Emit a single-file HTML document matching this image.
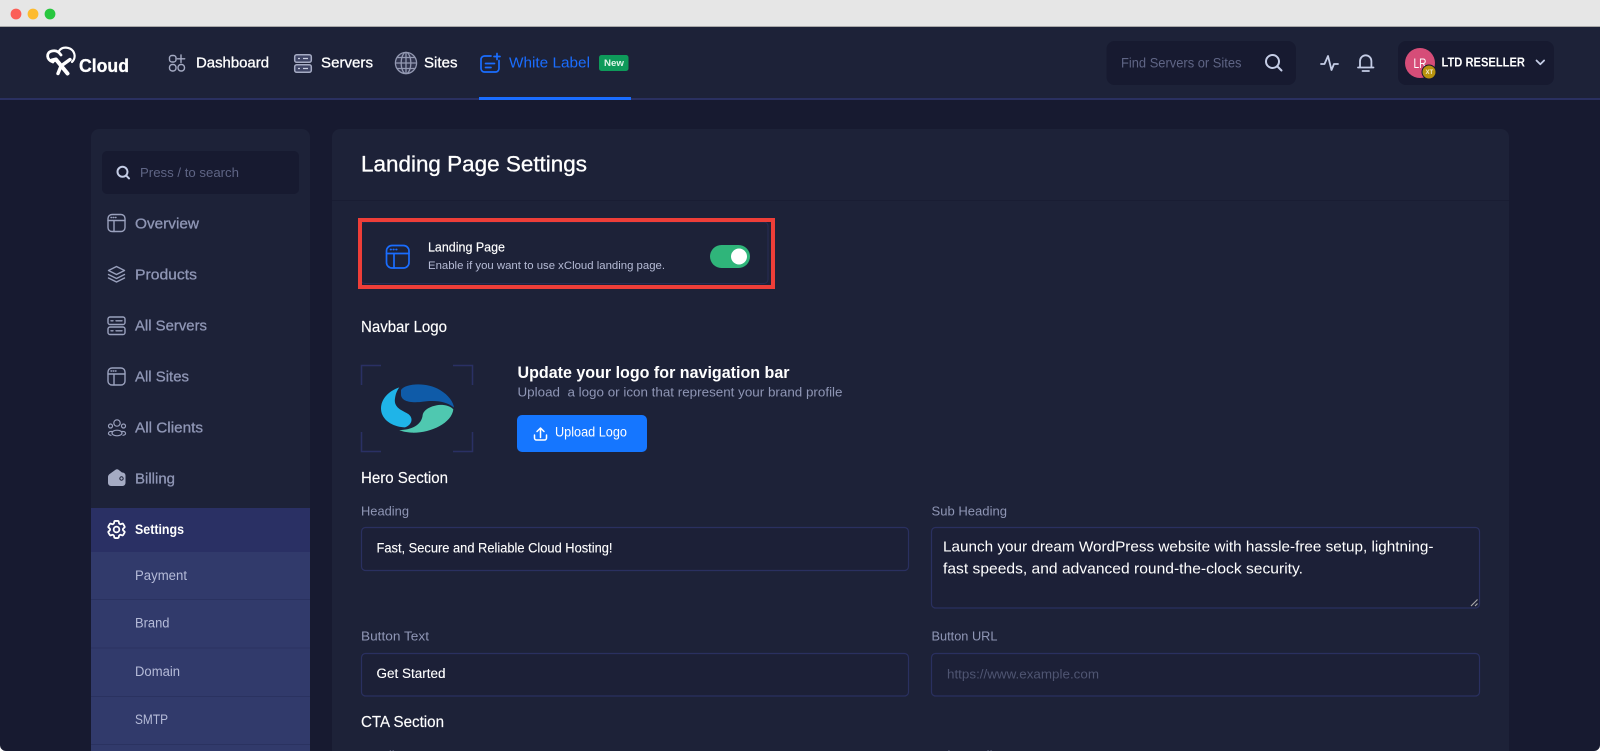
<!DOCTYPE html>
<html lang="en">
<head>
<meta charset="utf-8">
<title>Landing Page Settings</title>
<style>
html,body{margin:0;padding:0;width:1600px;height:751px;overflow:hidden;background:#171a30}
svg{display:block}
text{font-family:"Liberation Sans",sans-serif;white-space:pre}
.m{stroke-width:.3px;paint-order:stroke}
.w{fill:#fff;stroke:#fff;stroke-width:.3px}
.g{fill:#8f96b5;stroke:#8f96b5}
.s{fill:#b5bbd8}
.ph{fill:#5f6585}
.ic{fill:none;stroke:#9aa1bd;stroke-width:1.4;stroke-linecap:round;stroke-linejoin:round}
.bl{fill:none;stroke:#1a6dff;stroke-width:1.7;stroke-linecap:round;stroke-linejoin:round}
.in{fill:#1c2037;stroke:#2a3060;stroke-width:1.2}
</style>
</head>
<body>
<svg width="1600" height="751" viewBox="0 0 1600 751" xmlns="http://www.w3.org/2000/svg">
<rect width="1600" height="751" fill="#171a30"/>
<!-- window bar -->
<rect width="1600" height="26.5" fill="#e6e6e6"/>
<rect y="26" width="1600" height="1" fill="#a9a9a9"/>
<circle cx="16" cy="14" r="5.4" fill="#fb5f57"/>
<circle cx="33" cy="14" r="5.4" fill="#fdbb2e"/>
<circle cx="50" cy="14" r="5.4" fill="#28c73f"/>
<!-- navbar -->
<rect y="27" width="1600" height="71" fill="#1d2238"/>
<rect y="98" width="1600" height="2" fill="#2a3060"/>
<rect x="479" y="97" width="152" height="3" fill="#1a6dff"/>
<!-- logo -->
<g fill="none" stroke="#fff" stroke-linecap="round" stroke-linejoin="round">
<path d="M53 62C46 60 46 52 52 51C56 50 59 52 61 55" stroke-width="2.800"/>
<path d="M59 51C62 46 70 47 73 51C75.500 55 75 59 72 62" stroke-width="2.200"/>
<path d="M52 60.500L56 59.500L67.500 73.500" stroke-width="4"/>
<path d="M70 59.500L61 66L58 73.500" stroke-width="3.400"/>
</g>
<text x="79" y="72" font-size="18.500" font-weight="700" class="w" textLength="50" lengthAdjust="spacingAndGlyphs">Cloud</text>
<!-- nav items -->
<g class="ic" style="stroke:#a5abc3">
<rect x="169.500" y="55.500" width="6.500" height="6.500" rx="2.400"/>
<path d="M181 55v7.500M177.300 58.800h7.400"/>
<rect x="169.500" y="64.500" width="6.500" height="6.500" rx="2.800"/>
<rect x="178" y="64.500" width="6.500" height="6.500" rx="3"/>
</g>
<text x="196" y="67.500" font-size="15" class="m w" textLength="73" lengthAdjust="spacingAndGlyphs">Dashboard</text>
<g fill="#3f4565" stroke="#a5abc3" stroke-width="1.5">
<rect x="294.700" y="54.700" width="16.600" height="7.600" rx="2"/>
<rect x="294.700" y="64.700" width="16.600" height="7.600" rx="2"/>
</g>
<path d="M298 58.500h2M303 58.500h5M298 68.500h2M303 68.500h5" stroke="#c9cee0" stroke-width="1.200"/>
<text x="321" y="67.500" font-size="15" class="m w" textLength="52" lengthAdjust="spacingAndGlyphs">Servers</text>
<g fill="none" stroke="#9399b2" stroke-width="1.300">
<circle cx="406" cy="63" r="10.600" fill="#30344e"/>
<ellipse cx="406" cy="63" rx="4.800" ry="10.600"/>
<path d="M406 52.400v21.200M395.400 63h21.200M397 57.500h18M397 68.500h18"/>
</g>
<text x="424" y="67.500" font-size="15" class="m w" textLength="33.500" lengthAdjust="spacingAndGlyphs">Sites</text>
<path class="bl" d="M491 56h-6.500a3.500 3.500 0 0 0-3.500 3.500v9a3.500 3.500 0 0 0 3.500 3.500h11a3.500 3.500 0 0 0 3.500-3.500v-8M497 53.500v6M494 56.500h6M485.500 63.500h9M485.500 67.500h5.500"/>
<text x="509" y="67.500" font-size="15" fill="#1a6dff" textLength="81" lengthAdjust="spacingAndGlyphs">White Label</text>
<rect x="599" y="55" width="29.500" height="16" rx="2.500" fill="#0e9a5a"/>
<text x="604" y="66" font-size="9.500" font-weight="700" fill="#dff5e9" textLength="20" lengthAdjust="spacingAndGlyphs">New</text>
<!-- right nav -->
<rect x="1106.500" y="41" width="189.500" height="44" rx="8" fill="#171a30"/>
<text x="1121" y="67.500" font-size="13.500" class="ph" textLength="120.500" lengthAdjust="spacingAndGlyphs">Find Servers or Sites</text>
<g fill="none" stroke="#c5cde6" stroke-width="2" stroke-linecap="round">
<circle cx="1272.500" cy="61.500" r="6.500"/>
<path d="M1277.500 66.500l4 4"/>
</g>
<path d="M1321 64h3.500l3.500-8 3.500 14 2.500-6h4" fill="none" stroke="#c5cde6" stroke-width="1.800" stroke-linecap="round" stroke-linejoin="round"/>
<path d="M1358 67.500h15.500M1360 67.500v-6.500a5.700 5.700 0 0 1 11.400 0v6.500M1362.500 71h6.500" fill="none" stroke="#c5cde6" stroke-width="1.800" stroke-linecap="round"/>
<rect x="1398" y="41" width="156" height="44" rx="8" fill="#171a30"/>
<circle cx="1420" cy="63" r="15" fill="#d64d78"/>
<text x="1413.500" y="68" font-size="14" fill="#fff" textLength="13" lengthAdjust="spacingAndGlyphs">LR</text>
<circle cx="1429" cy="72" r="7" fill="#b8930e" stroke="#171a30" stroke-width="1"/>
<text x="1425.500" y="74.200" font-size="6" font-weight="700" fill="#f3eccb">XT</text>
<text x="1441.500" y="66.500" font-size="12.500" font-weight="700" fill="#fff" textLength="83.500" lengthAdjust="spacingAndGlyphs">LTD RESELLER</text>
<path d="M1536.500 60.500l3.800 3.800 3.800-3.800" fill="none" stroke="#c5cde6" stroke-width="1.800" stroke-linecap="round" stroke-linejoin="round"/>

<!-- sidebar -->
<path d="M91 751V137a8 8 0 0 1 8-8H302a8 8 0 0 1 8 8V751Z" fill="#1d2238"/>
<rect x="102" y="151" width="197" height="43" rx="5" fill="#171a30"/>
<g fill="none" stroke="#c5cde6" stroke-width="2" stroke-linecap="round">
<circle cx="122.500" cy="171.800" r="5"/><path d="M126.300 175.700l2.700 2.700"/>
</g>
<text x="140" y="177" font-size="13" class="ph" textLength="99" lengthAdjust="spacingAndGlyphs">Press / to search</text>

<g class="ic">
<rect x="108" y="214.500" width="17" height="17" rx="4"/>
<path d="M108 220.500h17M114 220.500v11"/>
<path d="M111 217.500h.6M113.200 217.500h.6M115.400 217.500h.6"/>
</g>
<text x="135" y="228.500" font-size="15" class="m g" textLength="64" lengthAdjust="spacingAndGlyphs">Overview</text>
<g class="ic">
<path d="M116.500 266.500l8 4-8 4-8-4z"/>
<path d="M108.500 274.500l8 4 8-4M108.500 278l8 4 8-4"/>
</g>
<text x="135" y="279.500" font-size="15" class="m g" textLength="62" lengthAdjust="spacingAndGlyphs">Products</text>
<g class="ic">
<rect x="108" y="317" width="17" height="7.500" rx="2"/>
<rect x="108" y="327" width="17" height="7.500" rx="2"/>
<path d="M111 320.800h2M116 320.800h6M111 330.800h2M116 330.800h6"/>
</g>
<text x="135" y="330.500" font-size="15" class="m g" textLength="72" lengthAdjust="spacingAndGlyphs">All Servers</text>
<g class="ic">
<rect x="108" y="368" width="17" height="17" rx="4"/>
<path d="M108 374h17M114 374v11"/>
<path d="M111 371h.6M113.200 371h.6M115.400 371h.6"/>
</g>
<text x="135" y="381.500" font-size="15" class="m g" textLength="54" lengthAdjust="spacingAndGlyphs">All Sites</text>
<g class="ic" style="stroke-width:1.200">
<circle cx="117" cy="423" r="3.200"/>
<ellipse cx="117" cy="433" rx="5" ry="2.800"/>
<circle cx="110.500" cy="426" r="2"/><circle cx="123.500" cy="426" r="2"/>
<path d="M112 431.500c-4-.5-5 3.500-1 3.800M122 431.500c4-.5 5 3.500 1 3.800"/>
</g>
<text x="135" y="432.500" font-size="15" class="m g" textLength="68" lengthAdjust="spacingAndGlyphs">All Clients</text>
<path d="M108 477c0-1 .5-2 1.300-2.700l6.200-4.500c1-.7 2-.7 3 0l3.500 2.700h.5a3 3 0 0 1 3 3V483a3 3 0 0 1-3 3h-11.500a3 3 0 0 1-3-3z" fill="#a5abc3"/>
<circle cx="121.500" cy="478.500" r="1.700" fill="none" stroke="#1d2238" stroke-width="1"/>
<text x="135" y="483.500" font-size="15" class="m g" textLength="40" lengthAdjust="spacingAndGlyphs">Billing</text>

<rect x="91" y="508" width="219" height="44" fill="#2a3064"/>
<g transform="translate(116.500 529.500) scale(.95) translate(-12 -12)" fill="none" stroke="#fff" stroke-width="1.900" stroke-linejoin="round">
<path d="M9.594 3.940c.09-.542.56-.94 1.110-.94h2.593c.55 0 1.020.398 1.110.94l.213 1.281c.063.374.313.686.645.870.074.04.147.083.22.127.325.196.72.257 1.075.124l1.217-.456a1.125 1.125 0 0 1 1.370.49l1.296 2.247a1.125 1.125 0 0 1-.26 1.431l-1.003.827c-.293.241-.438.613-.43.992a7.723 7.723 0 0 1 0 .255c-.008.378.137.75.43.991l1.004.827c.424.35.534.955.26 1.430l-1.298 2.247a1.125 1.125 0 0 1-1.369.491l-1.217-.456c-.355-.133-.75-.072-1.076.124a6.470 6.470 0 0 1-.22.128c-.331.183-.581.495-.644.869l-.213 1.281c-.09.543-.56.94-1.110.94h-2.594c-.55 0-1.019-.398-1.110-.94l-.213-1.281c-.062-.374-.312-.686-.644-.870a6.520 6.520 0 0 1-.22-.127c-.325-.196-.72-.257-1.076-.124l-1.217.456a1.125 1.125 0 0 1-1.369-.49l-1.297-2.247a1.125 1.125 0 0 1 .26-1.431l1.004-.827c.292-.24.437-.613.43-.991a6.932 6.932 0 0 1 0-.255c.007-.38-.138-.751-.43-.992l-1.004-.827a1.125 1.125 0 0 1-.26-1.430l1.297-2.247a1.125 1.125 0 0 1 1.370-.491l1.216.456c.356.133.751.072 1.076-.124.072-.044.146-.086.22-.128.332-.183.582-.495.644-.869l.214-1.280Z"/>
<circle cx="12" cy="12" r="3"/>
</g>
<text x="135" y="534" font-size="13.500" font-weight="700" fill="#fff" textLength="49" lengthAdjust="spacingAndGlyphs">Settings</text>

<rect x="91" y="552" width="219" height="199" fill="#313a6b"/>
<g fill="#2a3260">
<rect x="91" y="599" width="219" height="1"/>
<rect x="91" y="647.500" width="219" height="1"/>
<rect x="91" y="696" width="219" height="1"/>
<rect x="91" y="744" width="219" height="1"/>
</g>
<text x="135" y="580" font-size="13.500" class="s" textLength="52" lengthAdjust="spacingAndGlyphs">Payment</text>
<text x="135" y="627.500" font-size="13.500" class="s" textLength="34.500" lengthAdjust="spacingAndGlyphs">Brand</text>
<text x="135" y="676" font-size="13.500" class="s" textLength="45" lengthAdjust="spacingAndGlyphs">Domain</text>
<text x="135" y="724" font-size="13.500" class="s" textLength="33" lengthAdjust="spacingAndGlyphs">SMTP</text>

<!-- main panel -->
<path d="M332 751V137a8 8 0 0 1 8-8H1501a8 8 0 0 1 8 8V751Z" fill="#1d2238"/>
<rect x="332" y="200" width="1177" height="1" fill="#191d33"/>
<text x="361" y="171.500" font-size="22" class="m w" textLength="226" lengthAdjust="spacingAndGlyphs">Landing Page Settings</text>

<!-- toggle card -->
<rect x="361" y="222" width="407" height="61.500" rx="4" fill="none" stroke="#272c55" stroke-width="1"/>
<rect x="360" y="220" width="413" height="67" fill="none" stroke="#ee3e38" stroke-width="4"/>
<g class="bl">
<rect x="386.500" y="245.500" width="22.500" height="22.500" rx="5.500"/>
<path d="M386.500 253.500h22.500M394 253.500v14.500"/>
<path d="M390.500 249.500h.6M393.300 249.500h.6M396.100 249.500h.6"/>
</g>
<text x="428" y="251.500" font-size="13" class="m w" style="stroke-width:.15px" textLength="77" lengthAdjust="spacingAndGlyphs">Landing Page</text>
<text x="428" y="269" font-size="11" fill="#b6bcd6" textLength="237" lengthAdjust="spacingAndGlyphs">Enable if you want to use xCloud landing page.</text>
<rect x="710" y="245" width="40" height="23" rx="11.500" fill="#2fb57a"/>
<circle cx="739" cy="256.500" r="8" fill="#fff"/>

<!-- navbar logo -->
<text x="361" y="332" font-size="16" class="m w" style="stroke-width:.15px" textLength="86" lengthAdjust="spacingAndGlyphs">Navbar Logo</text>
<path d="M381 365.500h-19.500V385M453 365.500h19.500V385M381 451.500h-19.500V432M453 451.500h19.500V432" fill="none" stroke="#2a3064" stroke-width="1.500"/>
<g transform="translate(340 340) scale(.33333)">
<path d="M178 142C140 155 118 185 124 215C130 245 165 262 195 262C215 255 222 235 205 222C190 212 160 205 165 175C167 160 172 150 178 142Z" fill="#1fb4e8"/>
<path d="M183 150C195 130 260 125 300 150C325 165 340 185 342 203C320 185 290 180 250 185C215 190 185 185 183 165Z" fill="#0f5ba8"/>
<path d="M340 208C335 250 270 280 215 278C200 277 185 274 178 270C215 270 245 255 248 225C252 205 285 193 310 195C325 197 335 202 340 208Z" fill="#4fc8b0"/>
</g>
<text x="517.500" y="378" font-size="16.500" font-weight="700" fill="#fff" textLength="272" lengthAdjust="spacingAndGlyphs">Update your logo for navigation bar</text>
<text x="517.500" y="396.500" font-size="13" fill="#8f96b5" textLength="325" lengthAdjust="spacingAndGlyphs">Upload  a logo or icon that represent your brand profile</text>
<rect x="517" y="415" width="130" height="37" rx="5" fill="#1576ff"/>
<path d="M540.500 437.500v-9M537 431.500l3.500-3.500 3.500 3.500M534.500 435v3a2 2 0 0 0 2 2h8a2 2 0 0 0 2-2v-3" fill="none" stroke="#fff" stroke-width="1.500" stroke-linecap="round" stroke-linejoin="round"/>
<text x="555" y="436.500" font-size="13.500" fill="#fff" textLength="72" lengthAdjust="spacingAndGlyphs">Upload Logo</text>

<!-- hero -->
<text x="361" y="483" font-size="16" class="m w" style="stroke-width:.15px" textLength="87" lengthAdjust="spacingAndGlyphs">Hero Section</text>
<text x="361" y="515.500" font-size="13" fill="#8f96b5" textLength="48" lengthAdjust="spacingAndGlyphs">Heading</text>
<rect class="in" x="361.500" y="527.500" width="547" height="43" rx="4"/>
<text x="376.500" y="552.500" font-size="13.500" class="m w" style="stroke-width:.12px" textLength="236" lengthAdjust="spacingAndGlyphs">Fast, Secure and Reliable Cloud Hosting!</text>

<text x="931.500" y="515.500" font-size="13" fill="#8f96b5" textLength="75.500" lengthAdjust="spacingAndGlyphs">Sub Heading</text>
<rect class="in" x="931.500" y="527.500" width="548" height="80.500" rx="4"/>
<text x="943" y="551.500" font-size="14.500" fill="#fff" textLength="490.500" lengthAdjust="spacingAndGlyphs">Launch your dream WordPress website with hassle-free setup, lightning-</text>
<text x="943" y="573.500" font-size="14.500" fill="#fff" textLength="360" lengthAdjust="spacingAndGlyphs">fast speeds, and advanced round-the-clock security.</text>
<path d="M1471 606l6.500-6.500M1475 606l2.500-2.500" stroke="#a8a8a8" stroke-width="1.200"/>

<text x="361" y="640.500" font-size="13" fill="#8f96b5" textLength="68" lengthAdjust="spacingAndGlyphs">Button Text</text>
<rect class="in" x="361.500" y="653.500" width="547" height="42.500" rx="4"/>
<text x="376.500" y="678" font-size="13.500" class="m w" style="stroke-width:.12px" textLength="69" lengthAdjust="spacingAndGlyphs">Get Started</text>

<text x="931.500" y="640.500" font-size="13" fill="#8f96b5" textLength="66" lengthAdjust="spacingAndGlyphs">Button URL</text>
<rect class="in" x="931.500" y="653.500" width="548" height="42.500" rx="4"/>
<text x="947" y="678.500" font-size="13" fill="#4f5572" textLength="152" lengthAdjust="spacingAndGlyphs">https://www.example.com</text>

<text x="361" y="727" font-size="16" class="m w" style="stroke-width:.15px" textLength="83" lengthAdjust="spacingAndGlyphs">CTA Section</text>
<text x="361" y="760" font-size="13" fill="#8f96b5" textLength="48" lengthAdjust="spacingAndGlyphs">Heading</text>
<text x="931.500" y="760" font-size="13" fill="#8f96b5" textLength="75.500" lengthAdjust="spacingAndGlyphs">Sub Heading</text>

<!-- rounded window corners -->
<path d="M0 745V751H6A6 6 0 0 1 0 745Z" fill="#fff"/>
<path d="M1600 745V751H1594A6 6 0 0 0 1600 745Z" fill="#fff"/>
</svg>
</body>
</html>
